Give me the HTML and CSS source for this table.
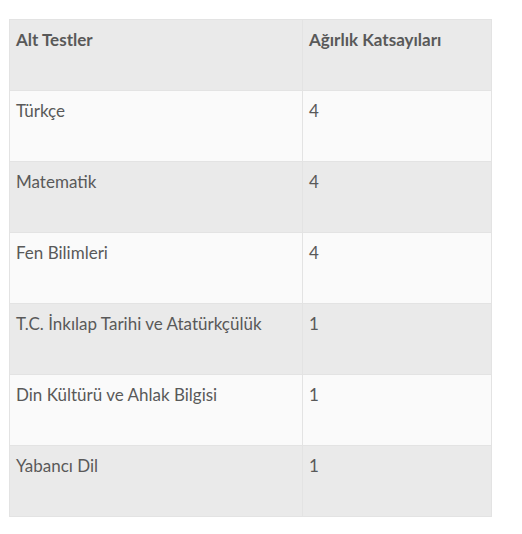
FILE: index.html
```html
<!DOCTYPE html>
<html lang="tr">
<head>
<meta charset="utf-8">
<link rel="stylesheet" href="styles.css">
</head>
<body>
<div class="wrap">
<table class="weights">
<thead>
<tr><th class="c1">Alt Testler</th><th class="c2">Ağırlık Katsayıları</th></tr>
</thead>
<tbody>
<tr><td>Türkçe</td><td>4</td></tr>
<tr><td>Matematik</td><td>4</td></tr>
<tr><td>Fen Bilimleri</td><td>4</td></tr>
<tr><td>T.C. İnkılap Tarihi ve Atatürkçülük</td><td>1</td></tr>
<tr><td>Din Kültürü ve Ahlak Bilgisi</td><td>1</td></tr>
<tr><td>Yabancı Dil</td><td>1</td></tr>
</tbody>
</table>
</div>
</body>
</html>
```
FILE: styles.css
```css
html, body { margin: 0; padding: 0; background: #ffffff; }
.wrap { padding: 19px 0 0 9px; }
.weights {
  border-collapse: collapse;
  width: 483px;
  font-family: Lato, "Open Sans", sans-serif;
  font-size: 17px;
  line-height: 24px;
  color: #595959;
  table-layout: fixed;
}
.weights th, .weights td {
  border: 1px solid #e3e3e3;
  height: 54px;
  padding: 8px 6px;
  vertical-align: top;
  text-align: left;
}
.weights th { font-weight: bold; background: #eaeaea; }
.weights .c1 { width: 280px; }
.weights tbody tr:nth-child(odd) td { background: #fafafa; }
.weights tbody tr:nth-child(even) td { background: #eaeaea; }
```
